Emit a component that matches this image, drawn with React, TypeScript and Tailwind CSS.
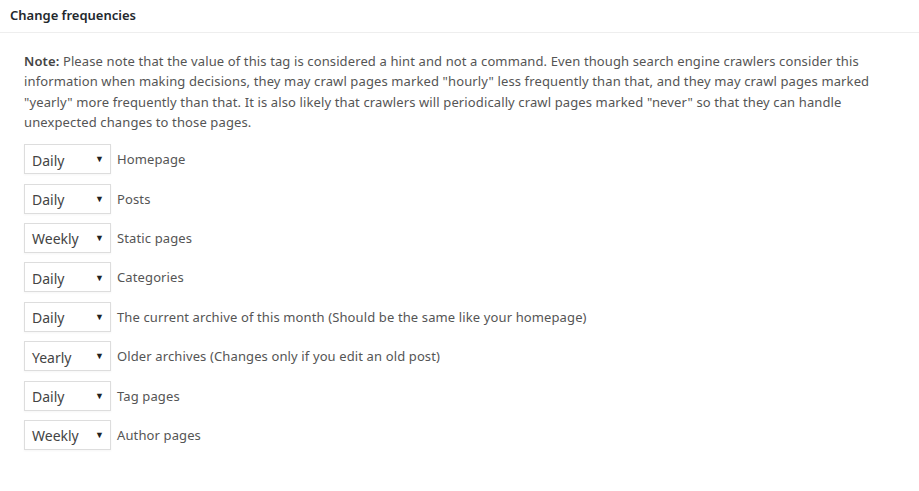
import React from "react";

const rows = [
  { value: "Daily", label: "Homepage" },
  { value: "Daily", label: "Posts" },
  { value: "Weekly", label: "Static pages" },
  { value: "Daily", label: "Categories" },
  { value: "Daily", label: "The current archive of this month (Should be the same like your homepage)" },
  { value: "Yearly", label: "Older archives (Changes only if you edit an old post)" },
  { value: "Daily", label: "Tag pages" },
  { value: "Weekly", label: "Author pages" },
];

function FakeSelect({ value }: { value: string }) {
  return (
    <div className="flex h-[30px] w-[87px] shrink-0 items-center justify-between border border-[#dddddd] bg-white pl-[7px] pr-[6px] text-[14px] text-[#444] shadow-[0_1px_2px_rgba(0,0,0,0.04)]">
      <span className="mt-[2px]">{value}</span>
      <span className="text-[9px] text-[#222]">▼</span>
    </div>
  );
}

export default function App() {
  return (
    <div className="min-h-[491px] w-[919px] bg-white font-['Noto_Sans',sans-serif] text-[#444]">
      <div className="border-b border-[#eeeeee] px-[10px] pt-[5px] pb-[7px]">
        <h2 className="text-[13px] font-semibold leading-[20px] text-[#23282d]">Change frequencies</h2>
      </div>
      <div className="pl-[24px] pr-[40px] pt-[18px]">
        <p className="text-[13px] leading-[20.3px] tracking-[0.12px] text-[#555]">
          <b className="font-semibold text-[#444]">Note:</b> Please note that the value of this tag is considered a hint and not a command. Even though search engine crawlers consider this information when making decisions, they may crawl pages marked "hourly" less frequently than that, and they may crawl pages marked "yearly" more frequently than that. It is also likely that crawlers will periodically crawl pages marked "never" so that they can handle unexpected changes to those pages.
        </p>
        <ul className="mt-[12px] flex flex-col gap-[9.4px]">
          {rows.map((r, i) => (
            <li key={i} className="flex items-start gap-[6px]">
              <FakeSelect value={r.value} />
              <span className="pt-[5px] text-[13px] leading-[20px] tracking-[0.12px] text-[#555]">{r.label}</span>
            </li>
          ))}
        </ul>
      </div>
    </div>
  );
}
